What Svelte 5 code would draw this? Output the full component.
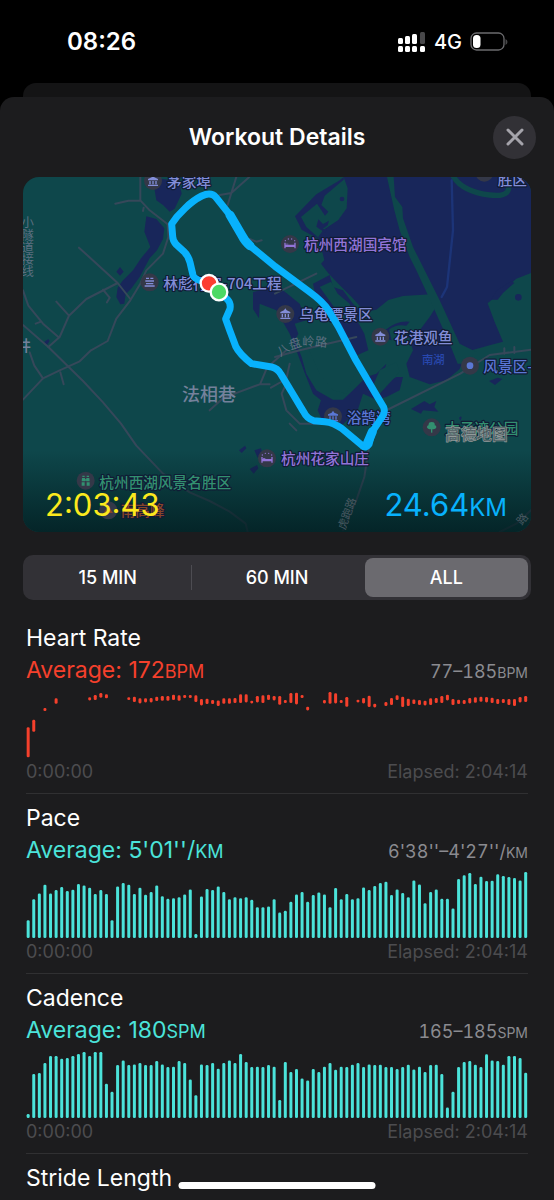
<script lang="ts">
  type Metric = {
    title: string
    average: string
    range: string
    unit: string
    perUnit: string
    tone: 'red' | 'teal'
    bars: number[][]
  }

  // Chart space is 1506 x 200, one slot per sample
  const SLOT = 16.77

  // [slot, top, bottom]
  const heartRate = [
    [0, 108, 198], [1, 86, 122], [3, 51, 60], [5, 22, 38], [11, 19, 28], [12, 12, 27],
    [13, 6, 20], [14, 10, 22], [18, 19, 27], [19, 17, 33], [20, 22, 37], [21, 22, 34],
    [22, 21, 34], [23, 17, 30], [24, 15, 29], [25, 15, 29], [26, 11, 27], [27, 13, 29],
    [28, 12, 21], [29, 12, 21], [30, 13, 33], [31, 24, 43], [32, 23, 39], [33, 27, 39],
    [34, 28, 45], [35, 22, 38], [36, 22, 38], [37, 21, 36], [38, 10, 36], [39, 10, 34],
    [40, 29, 37], [41, 15, 34], [42, 13, 36], [43, 11, 27], [44, 15, 28], [45, 15, 41],
    [46, 27, 36], [47, 6, 36], [48, 5, 40], [49, 12, 21], [50, 47, 58], [53, 27, 37],
    [54, 3, 38], [55, 7, 37], [56, 27, 36], [57, 18, 47], [59, 26, 34], [60, 21, 37],
    [61, 14, 48], [62, 38, 49], [64, 33, 45], [65, 21, 42], [66, 13, 27], [67, 17, 48],
    [68, 23, 45], [69, 25, 39], [70, 27, 42], [71, 29, 43], [72, 22, 42], [73, 21, 36],
    [74, 15, 36], [75, 11, 28], [76, 24, 42], [77, 26, 39], [78, 27, 39], [79, 21, 37],
    [80, 19, 35], [81, 17, 32], [82, 18, 34], [83, 20, 36], [84, 24, 39], [85, 24, 36],
    [86, 24, 42], [87, 24, 45], [88, 18, 34], [89, 15, 33]
  ]

  const pace = [
    53, 116, 133, 159, 133, 143, 152, 140, 144, 161, 157, 150, 131, 143, 131,
    53, 154, 164, 159, 131, 150, 129, 137, 157, 125, 117, 119, 122, 130, 145,
    12, 124, 146, 143, 154, 137, 116, 122, 119, 122, 114, 92, 92, 94, 116,
    76, 81, 108, 130, 137, 108, 128, 136, 130, 92, 149, 116, 131, 116, 119,
    151, 143, 155, 164, 168, 128, 145, 134, 122, 172, 160, 104, 137, 145, 117,
    117, 88, 176, 187, 194, 161, 183, 170, 171, 190, 185, 182, 179, 172, 197
  ]

  const cadence = [
    12, 131, 134, 164, 185, 185, 177, 179, 185, 191, 197, 185, 197, 197, 102,
    78, 158, 172, 158, 160, 164, 158, 158, 170, 160, 152, 153, 170, 164, 115,
    68, 160, 158, 164, 147, 164, 172, 164, 191, 167, 152, 153, 152, 158, 153,
    54, 167, 137, 146, 118, 112, 146, 137, 153, 164, 144, 153, 152, 159, 164,
    152, 160, 158, 159, 152, 152, 146, 152, 159, 145, 153, 137, 158, 159, 131,
    31, 78, 152, 167, 170, 159, 152, 190, 172, 170, 159, 185, 185, 179, 135
  ]

  const fromBase = (heights: number[]) => heights.map((h, i) => [i, 200 - h, 200])

  const metrics: Metric[] = [
    { title: 'Heart Rate', average: '172', range: '77–185', unit: 'BPM', perUnit: '', tone: 'red', bars: heartRate },
    { title: 'Pace', average: "5'01''", range: "6'38''–4'27''", unit: 'KM', perUnit: '/', tone: 'teal', bars: fromBase(pace) },
    { title: 'Cadence', average: '180', range: '165–185', unit: 'SPM', perUnit: '', tone: 'teal', bars: fromBase(cadence) }
  ]

  const spans = ['15 MIN', '60 MIN', 'ALL']
  let selected = $state('ALL')

  // Map space is 1524 x 1065
  const places = [
    { icon: 'temple', cx: 390, cy: 12, text: '茅家埠', x: 432, y: 29, tone: 'blue' },
    { icon: 'relic', cx: 380, cy: 316, text: '林彪行宫-704工程', x: 421, y: 335, tone: 'blue' },
    { icon: 'bed', cx: 801, cy: 201, text: '杭州西湖国宾馆', x: 843, y: 220, tone: 'purple' },
    { icon: 'temple', cx: 787, cy: 411, text: '乌龟潭景区', x: 829, y: 429, tone: 'blue' },
    { icon: 'temple', cx: 1072, cy: 479, text: '花港观鱼', x: 1113, y: 497, tone: 'blue' },
    { icon: 'dot', cx: 1341, cy: 566, text: '风景区-', x: 1381, y: 584, tone: 'azure' },
    { icon: 'temple', cx: 930, cy: 718, text: '浴鹄湾', x: 971, y: 739, tone: 'azure' },
    { icon: 'tree', cx: 1226, cy: 751, text: '太子湾公园', x: 1266, y: 772, tone: 'green' },
    { icon: 'bed', cx: 732, cy: 844, text: '杭州花家山庄', x: 774, y: 862, tone: 'purple' },
    { icon: 'binoculars', cx: 188, cy: 911, text: '杭州西湖风景名胜区', x: 229, y: 932, tone: 'green' },
    { icon: 'peak', cx: 256, cy: 1000, text: '南高峰', x: 293, y: 1016, tone: 'orange' },
    { icon: 'dot', cx: 1384, cy: -13, text: '胜区', x: 1424, y: 23, tone: 'blue' }
  ]
</script>

<div class="screen">
  <header class="status">
    <time>08:26</time>
    <div class="status-right">
      <svg class="signal" viewBox="0 0 28 20" aria-hidden="true">
        <rect x="0" y="6" width="5" height="6" rx="1.5" />
        <rect x="7" y="4" width="5" height="8" rx="1.5" />
        <rect x="14" y="2" width="5" height="10" rx="1.5" />
        <rect class="weak" x="22" y="0" width="5" height="12" rx="1.5" />
        <rect x="0" y="14" width="5" height="6" rx="1.5" />
        <rect x="7" y="14" width="5" height="6" rx="1.5" />
        <rect x="14" y="14" width="5" height="6" rx="1.5" />
        <rect x="22" y="14" width="5" height="6" rx="1.5" />
      </svg>
      <span>4G</span>
      <svg class="battery" viewBox="0 0 38 20" aria-hidden="true">
        <rect class="shell" x="1" y="1" width="33" height="17" rx="5.5" />
        <rect x="3" y="3" width="7.5" height="13" rx="3.5" />
        <path class="weak" d="M35.5 7 Q37.5 8 37.5 10 T35.5 13 Z" />
      </svg>
    </div>
  </header>

  <div class="behind"></div>

  <main class="sheet">
    <div class="titlebar">
      <h1>Workout Details</h1>
      <button class="close" aria-label="Close">
        <svg viewBox="0 0 18 18" aria-hidden="true"><path d="M2 2 L16 16 M16 2 L2 16" /></svg>
      </button>
    </div>

    <div class="map">
      <svg viewBox="0 0 1524 1065" preserveAspectRatio="xMidYMid slice" role="img" aria-label="Route map">
        <defs>
          <linearGradient id="fade" x1="0" y1="0" x2="0" y2="1">
            <stop offset="0" stop-color="#021c1f" stop-opacity="0" />
            <stop offset="1" stop-color="#021c1f" stop-opacity="0.8" />
          </linearGradient>
          <path id="lane" d="M772 540 Q812 508 852 507 T940 514" />
        </defs>

        <rect width="1524" height="1065" fill="#0e474b" />

        <!-- Lake -->
        <g class="water">
          <path d="M962 0 L974 34 L971 94 L946 129 L901 159 L886 179 L904 249 L894 260 L916 289 L946 320 L986 360 L1026 404 L1060 398 L1096 369 L1140 357 L1236 351 L1250 372 L1220 420 L1190 460 L1155 470 L1170 520 L1150 560 L1160 600 L1220 622 L1270 610 L1310 576 L1330 524 L1400 505 L1440 494 L1415 435 L1394 379 L1440 340 L1480 305 L1524 288 V0 Z" />
          <path d="M816 118 L880 52 L950 10 L962 0 L962 8 L905 56 L895 84 L916 104 L906 116 L882 80 L834 120 L850 150 L890 185 L880 182 L836 158 Z" />
          <path d="M886 127 l14 14 l18 -10 l-4 14 l-16 12 l14 -2 l-6 12 l-26 -18 Z" />
          <path d="M395 40 L412 5 L468 12 L476 50 L455 95 L440 104 L420 84 L400 70 Z" />
          <path d="M370 118 L400 126 L424 154 L420 186 L402 220 L380 244 L350 300 L324 336 L308 352 L304 380 L292 382 L280 360 L284 332 L298 312 L330 280 L354 244 L382 210 L364 164 Z" />
          <path d="M291 270 L302 284 L291 296 L280 284 Z M62 496 l14 -10 l4 6 l-8 12 Z" />
          <path d="M690 346 L740 330 L780 340 L830 380 L850 430 L815 440 L826 470 L816 490 L836 540 L850 590 L880 640 L930 668 L960 668 L990 640 L1030 600 L1060 590 L1090 560 L1070 630 L1120 600 L1140 600 L1130 640 L1090 660 L1060 668 L1020 650 L1004 700 L960 742 L900 736 L884 700 L894 670 L870 650 L846 590 L820 520 L800 470 L760 400 L710 380 L708 424 L690 396 Z" />
          <path d="M870 320 L920 294 L930 330 L960 340 L990 380 L1010 400 L1002 430 L1024 470 L1036 520 L990 540 L960 500 L930 440 L880 370 Z" />
          <path d="M1164 696 l40 -24 l16 10 l20 -10 l-6 18 l12 14 l-46 -4 l-6 10 Z M1398 612 l26 -10 l14 4 l-22 18 Z M1308 722 l6 -4 l2 4 l-4 10 Z" />
          <path d="M648 820 l18 -14 l4 8 l-14 14 Z M694 820 l20 -6 l4 18 l-14 10 Z M680 876 l22 -12 l4 10 l-14 16 Z" />
        </g>

        <!-- Causeways and islands -->
        <g class="land">
          <path d="M1092 0 L1112 0 L1116 60 L1138 90 L1140 124 L1170 210 L1250 370 L1310 500 L1360 525 L1330 560 L1304 560 L1280 500 L1220 366 L1180 280 L1160 240 L1130 160 L1114 100 Z" />
          <path d="M890 330 L924 314 L944 350 L980 380 L990 420 L974 440 L940 400 Z" />
          <path d="M880 480 L940 500 L970 530 L1000 580 L970 650 L930 640 L890 590 L850 500 Z" />
          <path d="M1070 580 L1120 555 L1130 585 L1070 650 L1044 640 Z" />
          <circle cx="950" cy="400" r="10" />
        </g>
        <path class="shore" d="M1292 0 Q1320 44 1400 54 T1448 0" />
        <g class="water">
          <circle cx="957" cy="66" r="7" />
          <circle cx="1486" cy="361" r="10" />
          <path d="M1404 368 L1422 340 L1466 312 L1474 318 L1440 348 L1424 368 Z" />
          <path d="M1086 460 Q1120 430 1160 434 L1150 446 Q1118 440 1098 458 L1106 490 L1090 486 Z" />
        </g>
        <path class="channel" d="M1286 10 L1290 160 L1272 330 L1256 360" />

        <!-- Roads -->
        <g class="roads">
          <path d="M352 0 V70 L380 100 L434 142 M277 80 L316 71 H352 M362 92 L360 102" />
          <path d="M434 142 L436 180 L420 230 L370 280 L352 320 L322 370 L280 425 L254 492 L204 520 L170 553 L110 580 L60 604 L0 668" />
          <path d="M168 212 L284 318 L322 366 M284 318 L190 366 L138 416 L110 480 L76 510 M138 416 L100 374 M240 338 L260 362 L252 376" />
          <path d="M0 340 L16 386 L60 440 L106 480 M0 444 L76 510 L180 612 L240 676 L294 740 L340 806 L420 890 L500 946 L560 972 L620 1004 L668 1040 L674 1065" />
          <path d="M20 526 L34 566 L60 604 M112 586 L122 622 M38 440 L54 434" />
          <path d="M679 0 L625 48 L590 54 M625 48 L614 84 M680 186 L700 194 L716 190 M640 0 L625 48" />
          <path d="M560 700 L600 664 L645 646 L710 622 L740 622 M712 620 L732 572 L790 520 M744 632 L790 606 L800 560" />
          <path d="M790 620 L776 650 L790 700 L830 740 L930 740 M800 740 L820 760" />
          <path d="M756 350 L880 290 M756 540 L830 520 L1000 480" />
          <path d="M1080 705 L1312 590 L1400 534 L1524 518 M1038 810 L1024 900 L1000 970 L960 1060 M1430 1065 L1480 1040 L1524 1000" />
          <path d="M1444 530 v-16 M1474 528 v-18" />
        </g>

        <rect y="820" width="1524" height="245" fill="url(#fade)" />

        {#each places as place}
          <g class="place {place.tone}">
            <circle class="badge" cx={place.cx} cy={place.cy} r="27" />
            <g transform="translate({place.cx} {place.cy})">
              {#if place.icon === 'temple'}
                <path d="M0 -17 L4 -11 L15 -6 L15 -2 H-15 V-6 L-4 -11 Z M-11 0 H-7 V10 H-11 Z M-2 0 H2 V10 H-2 Z M7 0 H11 V10 H7 Z M-15 11 H15 V15 H-15 Z" />
              {:else if place.icon === 'relic'}
                <path d="M-11 -14 H-2 V-10 H-11 Z M2 -14 H11 V-10 H2 Z M-13 -6 H13 V-2 H-13 Z M-11 2 H11 V6 H-11 Z M-15 9 H15 V13 H-15 Z" />
              {:else if place.icon === 'bed'}
                <path d="M-17 -4 H-13 V2 H13 V-4 H17 V13 H13 V9 H-13 V13 H-17 Z M-12 -1 H-5 V1 H-12 Z" />
                <circle cx="-14" cy="-10" r="2" />
                <circle cx="-5" cy="-15" r="2" />
                <circle cx="5" cy="-15" r="2" />
                <circle cx="14" cy="-10" r="2" />
              {:else if place.icon === 'tree'}
                <path d="M-2 4 H2 V16 H-2 Z" />
                <ellipse cx="0" cy="-9" rx="9" ry="7" />
                <ellipse cx="0" cy="-1" rx="14" ry="7" />
              {:else if place.icon === 'binoculars'}
                <path d="M-10 -15 H-3 V-11 H-10 Z M3 -15 H10 V-11 H3 Z M-11 -8 H-2 V-4 H2 V-8 H11 L12 2 H2 V0 H-2 V2 H-12 Z M-12 5 H-3 V15 H-12 Z M3 5 H12 V15 H3 Z" />
              {:else if place.icon === 'peak'}
                <path d="M-14 8 L-4 -8 L2 0 L6 -4 L14 8 Z" />
              {:else}
                <circle r="10" />
              {/if}
            </g>
            <text x={place.x} y={place.y}>{place.text}</text>
          </g>
        {/each}

        <text class="area" x="477" y="672">法相巷</text>
        <text class="area small" x="-22" y="523">井</text>
        <text class="lake" x="1197" y="561">南湖</text>
        <text class="road"><textPath href="#lane">八盘岭路</textPath></text>
        <text class="road vertical" x="14" y="118">小隧道接线</text>
        <text class="road dim" transform="translate(966 1060) rotate(-70)">虎跑路</text>
        <text class="road dim" transform="translate(1496 1046) rotate(-50)">路</text>
        <text class="credit" x="1266" y="790">高德地图</text>

        <path
          class="route"
          d="M558 319 L526 309 Q509 300 509 290 L501 256 Q496 236 483 224 L460 203 Q449 192 449 178 L446 141 L462 119 L486 94 Q510 70 536 57 Q564 44 578 60 L621 114 L656 174 Q666 194 681 206 L756 268 L856 342 Q900 374 916 399 L946 449 L996 545 L1056 647 L1082 691 Q1088 706 1076 722 L1048 764 L1038 802 Q1028 816 1018 806 L956 754 Q930 736 906 734 L872 731 Q852 726 841 703 L806 645 L774 592 Q764 574 746 570 L686 560 Q650 532 638 508 L620 460 L608 426 L621 396 Q624 378 614 368 L588 345"
        />
        <path class="route wide" d="M621 114 L656 174 Q666 194 681 206 M1048 764 L1032 802" />
        <circle class="marker finish" cx="558" cy="319" r="25" />
        <circle class="marker start" cx="588" cy="345" r="25" />
      </svg>

      <div class="totals">
        <span class="duration">2:03:43</span>
        <span class="distance">24.64<small>KM</small></span>
      </div>
    </div>

    <div class="segments" role="group" aria-label="Time span">
      {#each spans as span}
        <button class:active={selected === span} aria-pressed={selected === span} onclick={() => (selected = span)}>
          {span}
        </button>
      {/each}
    </div>

    {#each metrics as metric}
      <section class="metric {metric.tone}">
        <h2>{metric.title}</h2>
        <div class="summary">
          <span class="average">Average: {metric.average}{metric.perUnit}<small>{metric.unit}</small></span>
          <span class="range">{metric.range}{metric.perUnit}<small>{metric.unit}</small></span>
        </div>
        <svg class="chart" viewBox="0 0 1506 200" preserveAspectRatio="none" aria-hidden="true">
          {#each metric.bars as [slot, top, bottom]}
            <rect x={2 + slot * SLOT} y={top} width="9" height={bottom - top} rx="4" />
          {/each}
        </svg>
        <div class="axis">
          <span>0:00:00</span>
          <span>Elapsed: 2:04:14</span>
        </div>
      </section>
    {/each}

    <section class="metric">
      <h2>Stride Length</h2>
    </section>
  </main>

  <div class="home-indicator"></div>
</div>

<style>
  :global(body) {
    background: #000;
  }

  .screen {
    display: flex;
    flex-direction: column;
    min-height: 100vh;
    color: #fff;
    font-family: Inter, 'Noto Sans CJK SC', sans-serif;
  }

  .status {
    display: flex;
    align-items: center;
    justify-content: space-between;
    height: 83px;
    padding: 0 46px 0 67px;
    box-sizing: border-box;
  }

  .status time {
    font-size: 24px;
    font-weight: 600;
  }

  .status-right {
    display: flex;
    align-items: center;
    gap: 8px;
    font-size: 20px;
    font-weight: 500;
  }

  .status svg {
    fill: #fff;
  }

  .signal {
    width: 28px;
    height: 20px;
  }

  .battery {
    width: 38px;
    height: 20px;
  }

  .status .weak {
    fill: #48484a;
  }

  .status .shell {
    fill: none;
    stroke: #6b6b6e;
    stroke-width: 1.3;
  }

  .behind {
    height: 14px;
    margin: 0 23px;
    border-radius: 13px 13px 0 0;
    background: #141415;
  }

  .sheet {
    flex: 1;
    border-radius: 14px 14px 0 0;
    background: #1c1c1e;
  }

  .titlebar {
    display: grid;
    grid-template-columns: 1fr auto 1fr;
    align-items: center;
    height: 80px;
    padding: 0 18px;
  }

  h1 {
    grid-column: 2;
    margin: 0;
    font-size: 23px;
    font-weight: 600;
  }

  .close {
    display: grid;
    place-items: center;
    justify-self: end;
    width: 43px;
    height: 43px;
    padding: 0;
    border: none;
    border-radius: 50%;
    background: #323136;
    cursor: pointer;
  }

  .close svg {
    width: 18px;
    height: 18px;
    fill: none;
    stroke: #a5a4ab;
    stroke-width: 3;
    stroke-linecap: round;
  }

  .map {
    position: relative;
    margin: 0 23px;
    border-radius: 16px;
    overflow: hidden;
  }

  .map svg {
    display: block;
    width: 100%;
    height: auto;
  }

  .map text {
    font-family: 'Noto Sans CJK SC', sans-serif;
  }

  .water {
    fill: #18265a;
  }

  .land {
    fill: #0e474b;
  }

  .shore,
  .channel,
  .roads {
    fill: none;
    stroke-linejoin: round;
    stroke-linecap: round;
  }

  .shore {
    stroke: #0e474b;
    stroke-width: 16;
  }

  .channel {
    stroke: #1c3478;
    stroke-width: 7;
  }

  .roads {
    stroke: #36485a;
    stroke-width: 6;
  }

  .place text {
    font-size: 44px;
    font-weight: 500;
    stroke: #101b35;
    stroke-width: 7;
    stroke-linejoin: round;
    paint-order: stroke;
  }

  .place .badge {
    fill: #343848;
  }

  .blue {
    fill: #828dd8;
  }

  .azure {
    fill: #5a77d4;
  }

  .purple {
    fill: #9274d8;
  }

  .green {
    fill: #329070;
  }

  .orange {
    fill: #85452a;
  }

  .area {
    font-size: 54px;
    font-weight: 500;
    fill: #74819b;
  }

  .area.small {
    font-size: 46px;
  }

  .lake {
    font-size: 34px;
    font-weight: 500;
    fill: #2848ae;
  }

  .road {
    font-size: 37px;
    fill: #5d6f80;
  }

  .road.dim {
    font-size: 33px;
    fill: #475860;
  }

  .vertical {
    writing-mode: vertical-rl;
  }

  .credit {
    font-size: 47px;
    font-weight: 700;
    fill: #45565a;
    stroke: #929a9b;
    stroke-width: 2;
  }

  .route {
    fill: none;
    stroke: #08b2fd;
    stroke-width: 21;
    stroke-linecap: round;
    stroke-linejoin: round;
  }

  .route.wide {
    stroke-width: 27;
  }

  .marker {
    stroke: #fff;
    stroke-width: 7;
  }

  .marker.finish {
    fill: #fc3d30;
  }

  .marker.start {
    fill: #4cd964;
  }

  .totals {
    position: absolute;
    left: 22px;
    right: 24px;
    bottom: 6px;
    display: flex;
    justify-content: space-between;
    font-size: 31px;
    line-height: 36px;
  }

  .totals small {
    font-size: 24px;
  }

  .duration {
    color: #fbe91d;
  }

  .distance {
    color: #08b2fd;
  }

  .segments {
    display: grid;
    grid-template-columns: repeat(3, 1fr);
    margin: 23px 23px 14px;
    border-radius: 10px;
    background: #323136;
  }

  .segments button {
    position: relative;
    height: 45px;
    padding: 0;
    border: 3px solid transparent;
    border-radius: 11px;
    background: none;
    background-clip: padding-box;
    color: #fff;
    font: 500 18px Inter, sans-serif;
    cursor: pointer;
  }

  .segments .active {
    background-color: #6b6a6f;
  }

  .segments button:not(.active) + button:not(.active)::before {
    content: '';
    position: absolute;
    left: -4px;
    top: 7px;
    bottom: 7px;
    width: 1px;
    background: #4d4c52;
  }

  .metric {
    margin: 0 26px;
    padding: 9px 0 10px;
    border-bottom: 1px solid #303032;
  }

  .metric:last-child {
    padding-bottom: 0;
    border-bottom: none;
  }

  h2 {
    margin: 0;
    font-size: 23px;
    font-weight: 400;
    line-height: 30px;
  }

  .summary {
    display: flex;
    align-items: baseline;
    justify-content: space-between;
    height: 34px;
    line-height: 34px;
  }

  .average {
    color: var(--tone);
    font-size: 23px;
  }

  .average small {
    font-size: 18px;
  }

  .range {
    color: #8b8b90;
    font-size: 18px;
    font-variant-numeric: tabular-nums;
  }

  .range small {
    font-size: 14px;
  }

  .red {
    --tone: #f5402c;
  }

  .teal {
    --tone: #4be3da;
  }

  .chart {
    display: block;
    width: 100%;
    height: 67px;
    margin: 4px 0 3px;
    fill: var(--tone);
  }

  .axis {
    display: flex;
    justify-content: space-between;
    color: #4c4c4f;
    font-size: 18px;
    line-height: 22px;
  }

  .home-indicator {
    position: fixed;
    left: 50%;
    bottom: 11px;
    width: 197px;
    height: 7px;
    border-radius: 4px;
    background: #fff;
    transform: translateX(-50%);
  }
</style>
